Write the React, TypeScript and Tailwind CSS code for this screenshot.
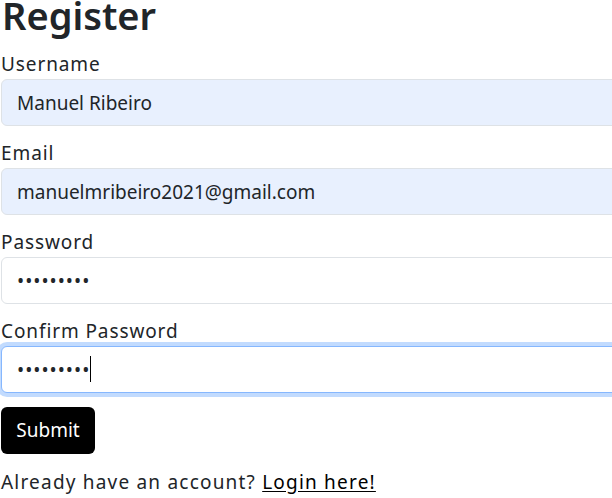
import { useState } from "react";

const Field = ({
  label,
  value,
  type = "text",
  filled = false,
  focused = false,
}: {
  label: string;
  value: string;
  type?: string;
  filled?: boolean;
  focused?: boolean;
}) => {
  const [val, setVal] = useState(value);
  return (
    <div className="flex flex-col">
      <label className="h-6 leading-6 text-[19px] tracking-[0.9px] text-[#212529]">{label}</label>
      <div className="relative mt-[3px]">
        <input
          type={type}
          value={val}
          onChange={(e) => setVal(e.target.value)}
          className={`h-[47px] w-[640px] rounded-[6px] border px-[15px] text-[19px] text-[#212529] outline-none caret-transparent ${
            type === "password" ? "tracking-[1px]" : ""
          } ${filled ? "bg-[#e8f0fe]" : "bg-white"} ${
            focused
              ? "border-[#86b7fe] shadow-[0_0_0_4px_#c2dbfe]"
              : "border-[#dee2e6]"
          }`}
        />
        {focused ? (
          <span className="absolute left-[89px] top-[10px] h-[26px] w-[1px] bg-black" />
        ) : null}
      </div>
    </div>
  );
};

const App = () => {
  return (
    <div
      className="w-[612px] h-[498px] overflow-hidden bg-white px-[1px]"
      style={{ fontFamily: '"Noto Sans", sans-serif' }}
    >
      <h1 className="-mt-[4px] ml-[1px] text-[38px] leading-[38px] font-semibold text-[#212529]">
        Register
      </h1>
      <div className="mt-[18px] flex flex-col gap-[15px]">
        <Field label="Username" value="Manuel Ribeiro" filled />
        <Field label="Email" value="manuelmribeiro2021@gmail.com" filled />
        <Field label="Password" value="123456789" type="password" />
        <Field label="Confirm Password" value="123456789" type="password" focused />
      </div>
      <button className="mt-[14px] h-[47px] w-[94px] rounded-[6px] bg-black text-[19px] text-white">
        Submit
      </button>
      <p className="mt-[16px] text-[19px] leading-6 tracking-[1.2px] text-[#212529]">
        Already have an account?{" "}
        <a href="#" className="text-black underline underline-offset-2">
          Login here!
        </a>
      </p>
    </div>
  );
};

export default App;
